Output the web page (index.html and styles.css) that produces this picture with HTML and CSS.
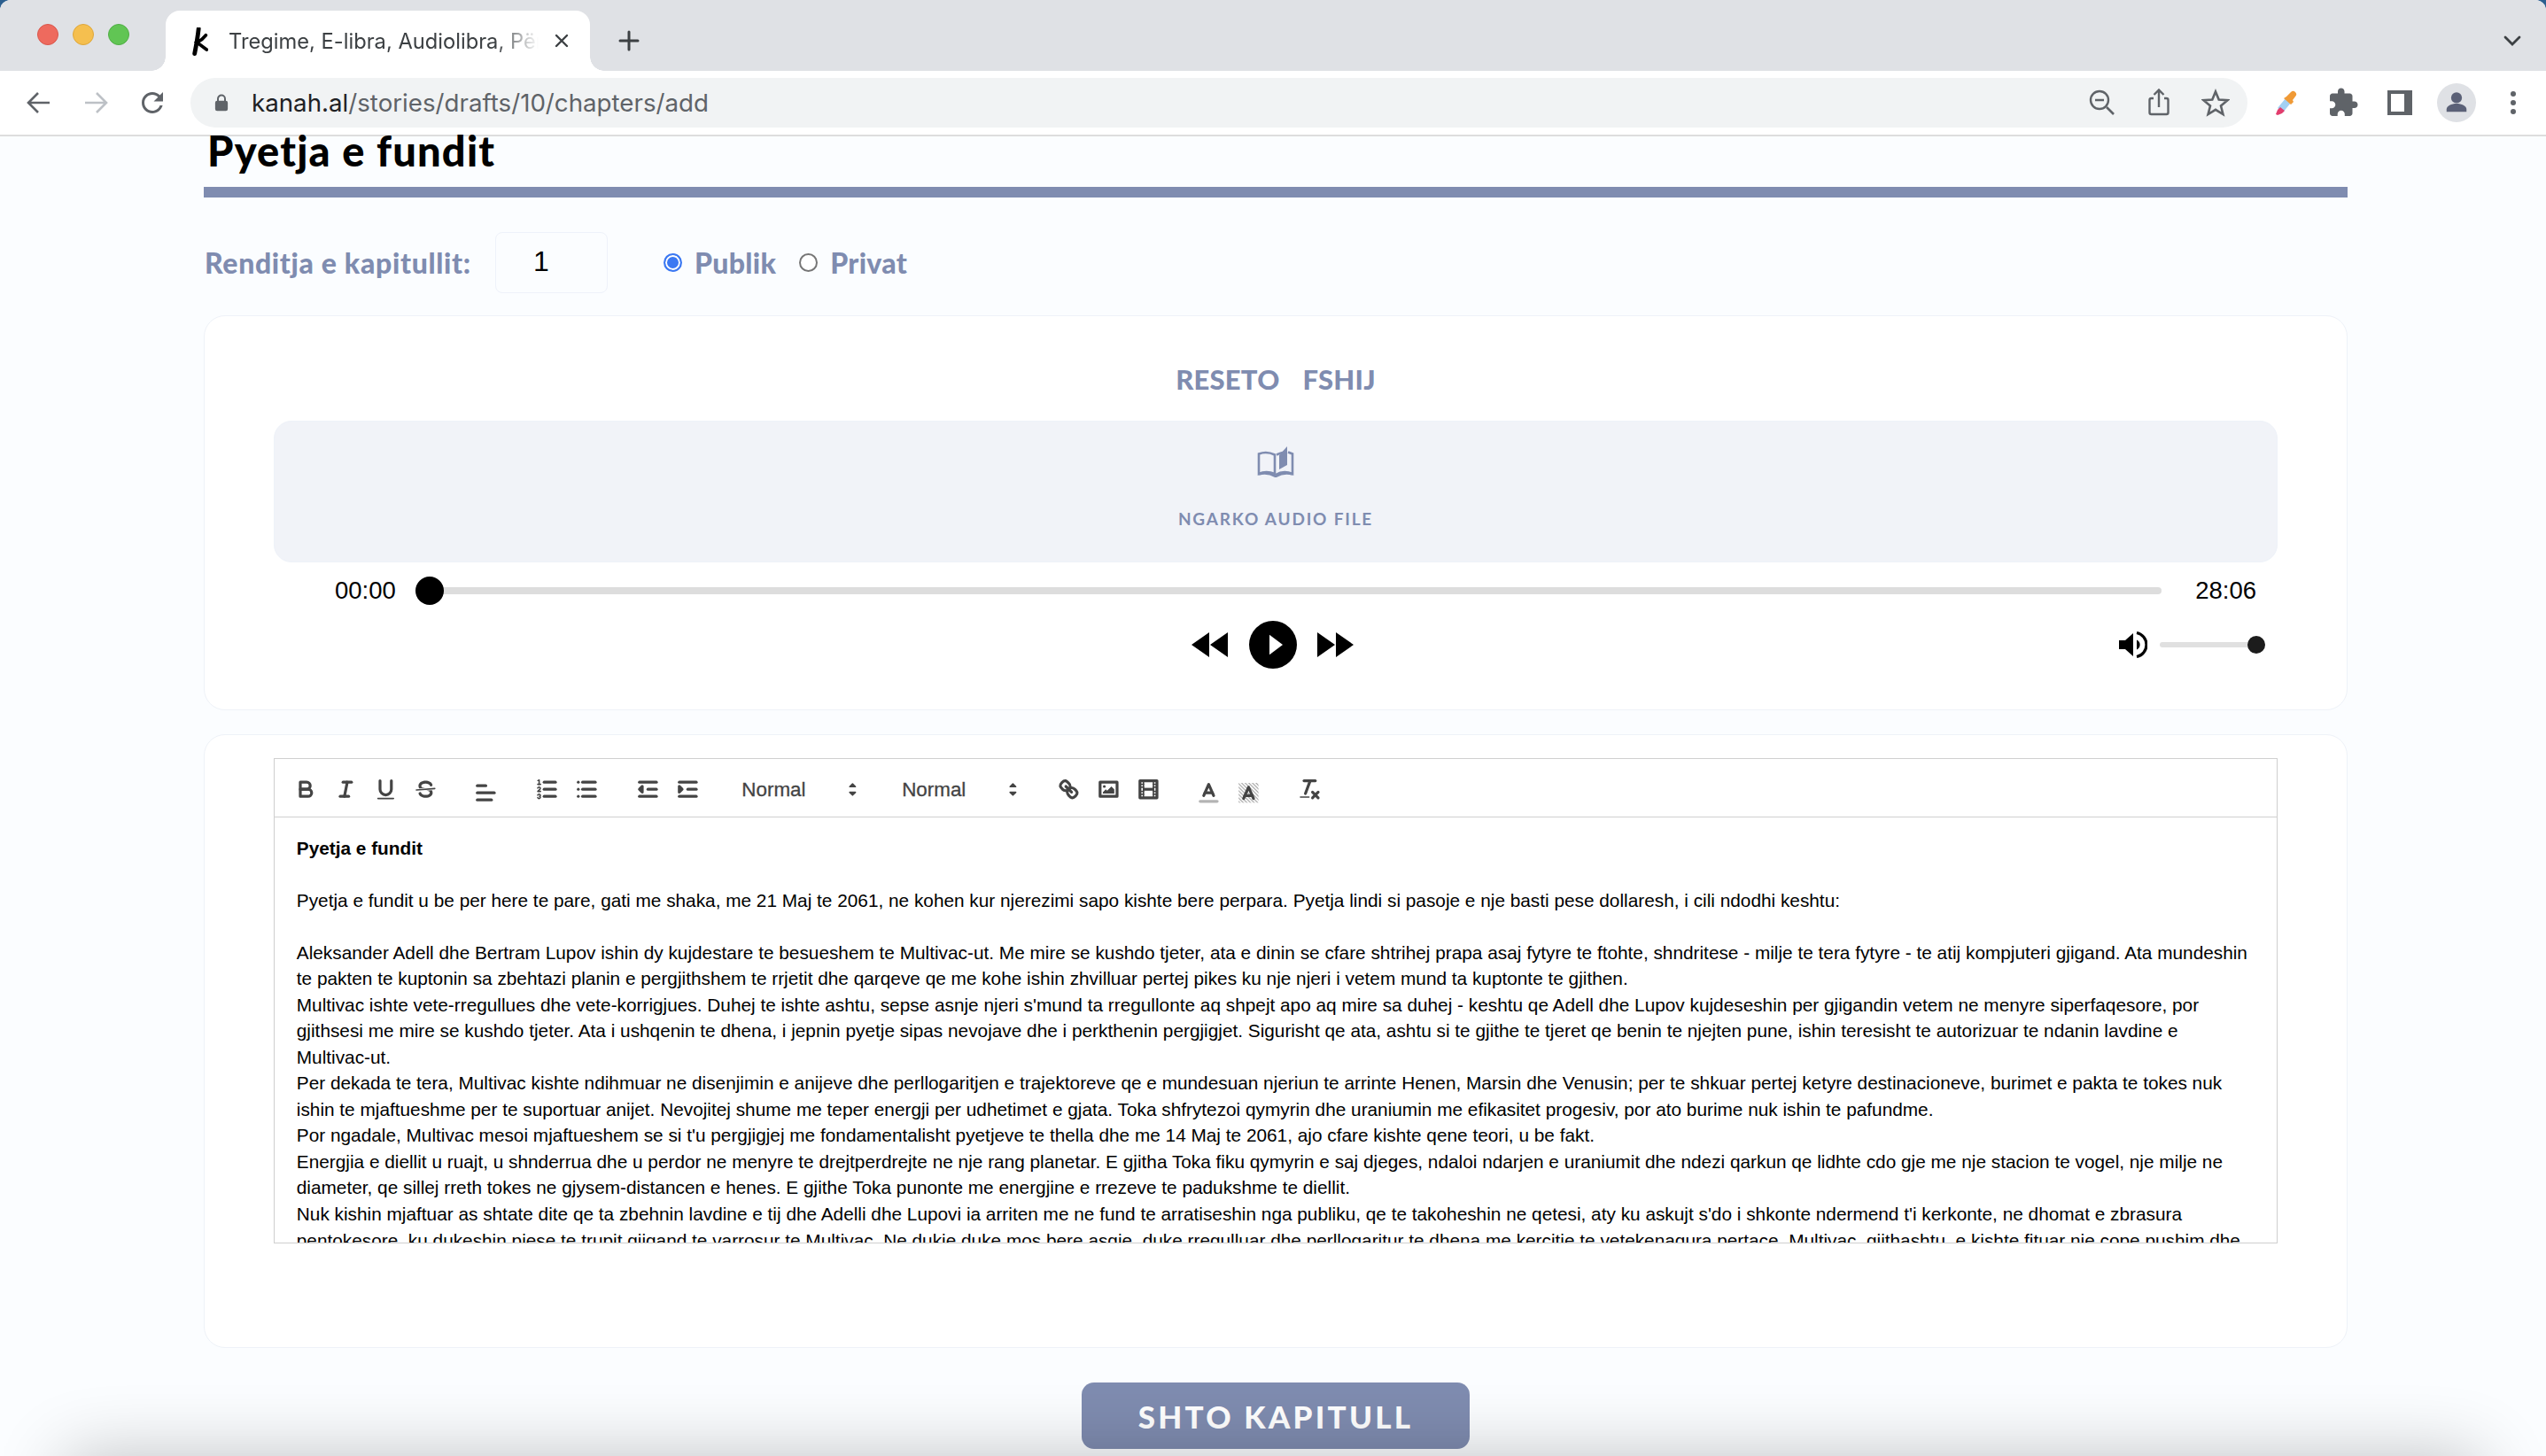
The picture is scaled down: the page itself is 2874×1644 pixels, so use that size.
FILE: index.html
```html
<!DOCTYPE html>
<html lang="sq">
<head>
<meta charset="utf-8">
<title>Tregime, E-libra, Audiolibra</title>
<link rel="stylesheet" href="styles.css">
</head>
<body>
<div class="window">
  <header class="tabstrip">
    <div class="lights"><span class="light red"></span><span class="light yellow"></span><span class="light green"></span></div>
    <div class="tab">
      <svg class="favicon" viewBox="0 0 20 34"><path d="M8 1 C7 10 5 22 3 32" fill="none" stroke="#000" stroke-width="5.400" stroke-linecap="round"/><path d="M17 9 C14 13 10 16 6 18 C10 21 14 24 18 27" fill="none" stroke="#000" stroke-width="4.200" stroke-linecap="round"/></svg>
      <span class="tab-title">Tregime, E-libra, Audiolibra, Për</span>
      <svg class="tab-close" viewBox="0 0 18 18"><path d="M3 3 15 15M15 3 3 15" stroke="#3c4043" stroke-width="2.400" stroke-linecap="round"/></svg>
    </div>
    <svg class="new-tab" viewBox="0 0 24 24"><path d="M12 2V22M2 12H22" stroke="#3c4043" stroke-width="3" stroke-linecap="round"/></svg>
    <svg class="tab-menu" viewBox="0 0 20 14"><path d="M2 3 10 11 18 3" fill="none" stroke="#3c4043" stroke-width="2.800" stroke-linecap="round"/></svg>
  </header>

  <nav class="toolbar">
    <span class="tb"><svg class="i28" viewBox="0 0 28 28"><path d="M26 14H3M13 3 2 14 13 25" fill="none" stroke="#5f6368" stroke-width="2.600"/></svg></span>
    <span class="tb"><svg class="i28" viewBox="0 0 28 28"><path d="M2 14H25M15 3 26 14 15 25" fill="none" stroke="#bdc1c6" stroke-width="2.600"/></svg></span>
    <span class="tb"><svg class="i36" viewBox="0 0 24 24"><path fill="#5f6368" d="M17.650 6.350C16.200 4.900 14.210 4 12 4c-4.420 0-7.990 3.580-7.990 8s3.570 8 7.990 8c3.730 0 6.840-2.550 7.730-6h-2.080c-.82 2.330-3.040 4-5.650 4-3.310 0-6-2.690-6-6s2.690-6 6-6c1.660 0 3.140.69 4.220 1.780L13 11h7V4l-2.350 2.350z"/></svg></span>
    <div class="omnibox">
      <svg class="lock" viewBox="0 0 18 22"><path d="M4.500 9V6a4.500 4.500 0 0 1 9 0v3" fill="none" stroke="#5f6368" stroke-width="2.200"/><rect x="1" y="8.500" width="16" height="13" rx="2.500" fill="#5f6368"/></svg>
      <span class="url"><b>kanah.al</b>/stories/drafts/10/chapters/add</span>
      <span class="tb"><svg class="i32" viewBox="0 0 32 32"><circle cx="13" cy="13" r="10" fill="none" stroke="#5f6368" stroke-width="2.400"/><path d="M8 13H18M21 21 29 29" stroke="#5f6368" stroke-width="2.600"/></svg></span>
      <span class="tb"><svg class="i32" viewBox="0 0 32 32"><path d="M10 11H7.500a2 2 0 0 0-2 2v14a2 2 0 0 0 2 2h17a2 2 0 0 0 2-2V13a2 2 0 0 0-2-2H22M16 21V2M10.500 7 16 1.500 21.500 7" fill="none" stroke="#5f6368" stroke-width="2.400"/></svg></span>
      <span class="tb"><svg class="i32" viewBox="0 0 32 32"><path d="M16 3.500 19.700 12.500 29.500 13.200 22 19.500 24.400 29 16 23.800 7.600 29 10 19.500 2.500 13.200 12.300 12.500Z" fill="none" stroke="#5f6368" stroke-width="2.600" stroke-linejoin="miter"/></svg></span>
    </div>
    <span class="tb first-ext"><svg class="i32" viewBox="0 0 32 32"><path d="M6 22 15 11 21 16 12 27Z" fill="#a3d0f3"/><path d="M4 29 6 24 9 21 14 25 11 28 6 30Z" fill="#e23d6d"/><path d="M14 11 21 4a3.500 3.500 0 0 1 5 5L23 13l1 2-3 3-8-7 3-2Z" fill="#f09a36"/></svg></span>
    <span class="tb"><svg class="i36" viewBox="0 0 24 24"><path fill="#5f6368" d="M20.500 11H19V7c0-1.100-.9-2-2-2h-4V3.500C13 2.120 11.880 1 10.500 1S8 2.120 8 3.500V5H4c-1.100 0-1.990.9-1.990 2v3.800H3.500c1.490 0 2.700 1.210 2.700 2.700s-1.210 2.700-2.700 2.700H2V20c0 1.100.9 2 2 2h3.800v-1.500c0-1.490 1.210-2.700 2.700-2.700 1.490 0 2.700 1.210 2.700 2.700V22H17c1.100 0 2-.9 2-2v-4h1.500c1.380 0 2.500-1.120 2.500-2.500S21.880 11 20.500 11z"/></svg></span>
    <span class="tb"><svg class="i28" viewBox="0 0 28 28"><path fill="#5f6368" fill-rule="evenodd" d="M0 0H28V28H0ZM4 4V24H19V4Z"/></svg></span>
    <span class="tb"><span class="avatar"><svg class="i32" viewBox="0 0 32 32"><circle cx="16" cy="10" r="6.500" fill="#5b6177"/><path d="M4 27V24c0-4.500 6-7 12-7s12 2.500 12 7v3Z" fill="#5b6177"/></svg></span></span>
    <span class="tb"><svg class="i32" viewBox="0 0 32 32"><circle cx="16" cy="6" r="3" fill="#5f6368"/><circle cx="16" cy="16" r="3" fill="#5f6368"/><circle cx="16" cy="26" r="3" fill="#5f6368"/></svg></span>
  </nav>

  <main class="page">
    <h1 class="title">Pyetja e fundit</h1>
    <div class="rule"></div>

    <div class="order">
      <span class="order-label">Renditja e kapitullit:</span>
      <span class="order-input">1</span>
      <span class="radio checked"></span><span class="radio-label">Publik</span>
      <span class="radio"></span><span class="radio-label">Privat</span>
    </div>

    <section class="card audio">
      <div class="actions"><span>RESETO</span><span>FSHIJ</span></div>
      <div class="drop">
        <svg class="book" viewBox="0 0 42 36"><path d="M2 9.500C7 7.500 14 7.500 20 10.500V32C14 29.500 7 29.500 2 32Z" fill="none" stroke="#7f8cb0" stroke-width="2.600"/><path d="M22 10.500C25 9 28 8 30 7.800M35 7.500 40 9.500V32C34 29.500 27 29.500 21 33" fill="none" stroke="#7f8cb0" stroke-width="2.600"/><path d="M2 32.500C8 30.500 14 31 21 35 28 31 34 30.500 40 32.500" fill="none" stroke="#7f8cb0" stroke-width="2.600"/><path d="M25 11 34 1V22L25 27Z" fill="#7f8cb0"/></svg>
        <span class="drop-label">NGARKO AUDIO FILE</span>
      </div>
      <div class="seek">
        <span class="time">00:00</span>
        <div class="track"><span class="thumb"></span></div>
        <span class="time end">28:06</span>
      </div>
      <div class="controls">
        <div class="transport">
          <svg class="skip" viewBox="0 0 41 28"><path d="M20 0V28L0 14ZM41 0V28L21 14Z"/></svg>
          <span class="play"><svg viewBox="0 0 16 24"><path d="M0 0V24L16 12Z" fill="#fff"/></svg></span>
          <svg class="skip" viewBox="0 0 41 28"><path d="M0 0V28L20 14ZM21 0V28L41 14Z"/></svg>
        </div>
        <div class="volume">
          <svg class="speaker" viewBox="0 0 32 30"><path d="M0 10H7L16 2V28L7 20H0Z"/><path d="M20 9.500a6 6 0 0 1 0 11Z"/><path d="M20 1.500a13.800 13.800 0 0 1 0 27" fill="none" stroke="#000" stroke-width="3.200"/></svg>
          <div class="vol-track"><span class="vol-thumb"></span></div>
        </div>
      </div>
    </section>

    <section class="card story">
      <div class="editor">
        <div class="ql-toolbar">
          <span class="ql-formats">
            <svg class="ql" viewBox="0 0 18 18"><path class="s" d="M5,4H9.500A2.500,2.500,0,0,1,12,6.500v0A2.500,2.500,0,0,1,9.500,9H5A0,0,0,0,1,5,9V4A0,0,0,0,1,5,4Z"/><path class="s" d="M5,9h5.500A2.500,2.500,0,0,1,13,11.500v0A2.500,2.500,0,0,1,10.500,14H5a0,0,0,0,1,0,0V9A0,0,0,0,1,5,9Z"/></svg>
            <svg class="ql" viewBox="0 0 18 18"><line class="s" x1="7" x2="13" y1="4" y2="4"/><line class="s" x1="5" x2="11" y1="14" y2="14"/><line class="s" x1="8" x2="10" y1="14" y2="4"/></svg>
            <svg class="ql" viewBox="0 0 18 18"><path class="s" d="M5,3V9a4.012,4.012,0,0,0,4,4H9a4.012,4.012,0,0,0,4-4V3"/><rect class="f" height="1" rx="0.500" ry="0.500" width="12" x="3" y="15"/></svg>
            <svg class="ql" viewBox="0 0 18 18"><line class="s thin" x1="15.500" x2="2.500" y1="8.500" y2="9.500"/><path class="f" d="M9.007,8C6.542,7.791,6,7.519,6,6.500,6,5.792,7.283,5,9,5c1.571,0,2.765.679,2.969,1.309a1,1,0,0,0,1.900-.617C13.356,4.106,11.354,3,9,3,6.200,3,4,4.538,4,6.500a3.200,3.200,0,0,0,.5,1.843Z"/><path class="f" d="M8.984,10C11.457,10.208,12,10.479,12,11.500c0,.708-1.283,1.500-3,1.500-1.571,0-2.765-.679-2.969-1.309a1,1,0,1,0-1.900.617C4.644,13.894,6.646,15,9,15c2.800,0,5-1.538,5-3.500a3.200,3.200,0,0,0-.5-1.843Z"/></svg>
          </span>
          <span class="ql-formats">
            <svg class="ql low" viewBox="0 0 18 18"><line class="s" x1="3" x2="15" y1="9" y2="9"/><line class="s" x1="3" x2="13" y1="14" y2="14"/><line class="s" x1="3" x2="9" y1="4" y2="4"/></svg>
          </span>
          <span class="ql-formats">
            <svg class="ql" viewBox="0 0 18 18"><line class="s" x1="7" x2="15" y1="4" y2="4"/><line class="s" x1="7" x2="15" y1="9" y2="9"/><line class="s" x1="7" x2="15" y1="14" y2="14"/><line class="s thin" x1="2.500" x2="4.500" y1="5.500" y2="5.500"/><path class="f" d="M3.500,6A0.500,0.500,0,0,1,3,5.500V3.085l-0.276.138A0.500,0.500,0,0,1,2.053,3c-0.124-.247-0.023-0.324.224-0.447l1-.5A0.500,0.500,0,0,1,4,2.500v3A0.500,0.500,0,0,1,3.500,6Z"/><path class="s thin" d="M4.500,10.500h-2c0-.234,1.850-1.076,1.850-2.234A0.959,0.959,0,0,0,2.500,8.156"/><path class="s thin" d="M2.500,14.846a0.959,0.959,0,0,0,1.850-.109A0.700,0.700,0,0,0,3.750,14a0.688,0.688,0,0,0,.6-0.736,0.959,0.959,0,0,0-1.850-.109"/></svg>
            <svg class="ql" viewBox="0 0 18 18"><line class="s" x1="6" x2="15" y1="4" y2="4"/><line class="s" x1="6" x2="15" y1="9" y2="9"/><line class="s" x1="6" x2="15" y1="14" y2="14"/><line class="s" x1="3" x2="3" y1="4" y2="4"/><line class="s" x1="3" x2="3" y1="9" y2="9"/><line class="s" x1="3" x2="3" y1="14" y2="14"/></svg>
          </span>
          <span class="ql-formats">
            <svg class="ql" viewBox="0 0 18 18"><line class="s" x1="3" x2="15" y1="14" y2="14"/><line class="s" x1="3" x2="15" y1="4" y2="4"/><line class="s" x1="9" x2="15" y1="9" y2="9"/><polygon class="s f" points="5 7 5 11 3 9 5 7"/></svg>
            <svg class="ql" viewBox="0 0 18 18"><line class="s" x1="3" x2="15" y1="14" y2="14"/><line class="s" x1="3" x2="15" y1="4" y2="4"/><line class="s" x1="9" x2="15" y1="9" y2="9"/><polygon class="s f" points="3 7 3 11 5 9 3 7"/></svg>
          </span>
          <span class="ql-formats">
            <span class="picker">Normal<svg class="ql-arrows" viewBox="0 0 18 18"><polygon class="s thin f" points="7 11 9 13 11 11 7 11"/><polygon class="s thin f" points="7 7 9 5 11 7 7 7"/></svg></span>
          </span>
          <span class="ql-formats">
            <span class="picker">Normal<svg class="ql-arrows" viewBox="0 0 18 18"><polygon class="s thin f" points="7 11 9 13 11 11 7 11"/><polygon class="s thin f" points="7 7 9 5 11 7 7 7"/></svg></span>
          </span>
          <span class="ql-formats">
            <svg class="ql" viewBox="0 0 18 18"><line class="s" x1="7" x2="11" y1="7" y2="11"/><path class="s" d="M8.900,4.577a3.476,3.476,0,0,1,.36,4.679A3.476,3.476,0,0,1,4.577,8.900C3.185,7.500,2.035,6.400,4.217,4.217S7.500,3.185,8.900,4.577Z"/><path class="s" d="M13.423,9.100a3.476,3.476,0,0,0-4.679-.36,3.476,3.476,0,0,0,.36,4.679c1.392,1.392,2.500,2.542,4.679.36S14.815,10.500,13.423,9.100Z"/></svg>
            <svg class="ql" viewBox="0 0 18 18"><rect class="s" height="10" width="12" x="3" y="4"/><circle class="f" cx="6" cy="7" r="1"/><polygon class="f" points="5 12 5 11 7 9 8 10 11 7 13 9 13 12 5 12"/></svg>
            <svg class="ql" viewBox="0 0 18 18"><rect class="s" height="12" width="12" x="3" y="3"/><rect class="f" height="12" width="1" x="5" y="3"/><rect class="f" height="12" width="1" x="12" y="3"/><rect class="f" height="2" width="8" x="5" y="8"/><rect class="f" height="1" width="3" x="3" y="5"/><rect class="f" height="1" width="3" x="3" y="7"/><rect class="f" height="1" width="3" x="3" y="10"/><rect class="f" height="1" width="3" x="3" y="12"/><rect class="f" height="1" width="3" x="12" y="5"/><rect class="f" height="1" width="3" x="12" y="7"/><rect class="f" height="1" width="3" x="12" y="10"/><rect class="f" height="1" width="3" x="12" y="12"/></svg>
          </span>
          <span class="ql-formats">
            <svg class="ql low" viewBox="0 0 18 18"><line class="s faint" x1="3" x2="15" y1="15" y2="15"/><polyline class="s" points="5.500 11 9 3 12.500 11"/><line class="s" x1="11.630" x2="6.380" y1="9" y2="9"/></svg>
            <svg class="ql low" viewBox="0 0 18 18"><defs><pattern id="hatch" width="1.800" height="1.800" patternUnits="userSpaceOnUse" patternTransform="rotate(45)"><rect width="1.800" height=".7" fill="#444"/></pattern></defs><rect x="2" y="2" width="14" height="14" fill="url(#hatch)" opacity=".5"/><polyline class="s" points="5.500 13 9 5 12.500 13"/><line class="s" x1="11.630" x2="6.380" y1="11" y2="11"/></svg>
          </span>
          <span class="ql-formats">
            <svg class="ql" viewBox="0 0 18 18"><line class="s" x1="5" x2="13" y1="3" y2="3"/><line class="s" x1="6" x2="9.350" y1="12" y2="3"/><line class="s" x1="11" x2="15" y1="11" y2="15"/><line class="s" x1="15" x2="11" y1="11" y2="15"/><rect class="f" height="1" rx="0.500" ry="0.500" width="7" x="2" y="14"/></svg>
          </span>
        </div>
        <div class="ql-editor">
          <p><strong>Pyetja e fundit</strong></p>
          <p><br></p>
          <p>Pyetja e fundit u be per here te pare, gati me shaka, me 21 Maj te 2061, ne kohen kur njerezimi sapo kishte bere perpara. Pyetja lindi si pasoje e nje basti pese dollaresh, i cili ndodhi keshtu:</p>
          <p><br></p>
          <p>Aleksander Adell dhe Bertram Lupov ishin dy kujdestare te besueshem te Multivac-ut. Me mire se kushdo tjeter, ata e dinin se cfare shtrihej prapa asaj fytyre te ftohte, shndritese - milje te tera fytyre - te atij kompjuteri gjigand. Ata mundeshin te pakten te kuptonin sa zbehtazi planin e pergjithshem te rrjetit dhe qarqeve qe me kohe ishin zhvilluar pertej pikes ku nje njeri i vetem mund ta kuptonte te gjithen.</p>
          <p>Multivac ishte vete-rregullues dhe vete-korrigjues. Duhej te ishte ashtu, sepse asnje njeri s'mund ta rregullonte aq shpejt apo aq mire sa duhej - keshtu qe Adell dhe Lupov kujdeseshin per gjigandin vetem ne menyre siperfaqesore, por gjithsesi me mire se kushdo tjeter. Ata i ushqenin te dhena, i jepnin pyetje sipas nevojave dhe i perkthenin pergjigjet. Sigurisht qe ata, ashtu si te gjithe te tjeret qe benin te njejten pune, ishin teresisht te autorizuar te ndanin lavdine e Multivac-ut.</p>
          <p>Per dekada te tera, Multivac kishte ndihmuar ne disenjimin e anijeve dhe perllogaritjen e trajektoreve qe e mundesuan njeriun te arrinte Henen, Marsin dhe Venusin; per te shkuar pertej ketyre destinacioneve, burimet e pakta te tokes nuk ishin te mjaftueshme per te suportuar anijet. Nevojitej shume me teper energji per udhetimet e gjata. Toka shfrytezoi qymyrin dhe uraniumin me efikasitet progesiv, por ato burime nuk ishin te pafundme.</p>
          <p>Por ngadale, Multivac mesoi mjaftueshem se si t'u pergjigjej me fondamentalisht pyetjeve te thella dhe me 14 Maj te 2061, ajo cfare kishte qene teori, u be fakt.</p>
          <p>Energjia e diellit u ruajt, u shnderrua dhe u perdor ne menyre te drejtperdrejte ne nje rang planetar. E gjitha Toka fiku qymyrin e saj djeges, ndaloi ndarjen e uraniumit dhe ndezi qarkun qe lidhte cdo gje me nje stacion te vogel, nje milje ne diameter, qe sillej rreth tokes ne gjysem-distancen e henes. E gjithe Toka punonte me energjine e rrezeve te padukshme te diellit.</p>
          <p>Nuk kishin mjaftuar as shtate dite qe ta zbehnin lavdine e tij dhe Adelli dhe Lupovi ia arriten me ne fund te arratiseshin nga publiku, qe te takoheshin ne qetesi, aty ku askujt s'do i shkonte ndermend t'i kerkonte, ne dhomat e zbrasura pentokesore, ku dukeshin pjese te trupit gjigand te varrosur te Multivac. Ne dukje duke mos bere asgje, duke rregulluar dhe perllogaritur te dhena me kercitje te vetekenaqura pertace, Multivac, gjithashtu, e kishte fituar nje cope pushim dhe</p>
        </div>
      </div>
    </section>

    <div class="submit-row"><button class="submit">SHTO KAPITULL</button></div>
  </main>
  <div class="edge-shadow"></div>
</div>
</body>
</html>
```

FILE: styles.css
```css
* { box-sizing: border-box; }
html, body { margin: 0; width: 2874px; height: 1644px; overflow: hidden; background: #2c5f8f; }

.window {
  position: relative;
  width: 2874px;
  height: 1644px;
  overflow: hidden;
  border-radius: 12px 12px 0 0;
  background: #fbfdff;
  font-family: "Liberation Sans", sans-serif;
}

/* browser chrome */
.tabstrip {
  height: 80px;
  background: #dfe1e5;
  display: flex;
  align-items: flex-start;
  font-family: Inter, sans-serif;
}
.lights { display: flex; gap: 16px; margin: 27px 0 0 42px; width: 145px; }
.light { width: 24px; height: 24px; border-radius: 50%; }
.red { background: #ee6a5e; border: 1px solid #d9574c; }
.yellow { background: #f5bf4f; border: 1px solid #dea73b; }
.green { background: #61c554; border: 1px solid #4fae44; }
.tab {
  position: relative;
  width: 479px;
  height: 68px;
  margin-top: 12px;
  background: #fff;
  border-radius: 16px 16px 0 0;
  display: flex;
  align-items: center;
  padding: 0 23px 0 30px;
}
.tab::before, .tab::after {
  content: "";
  position: absolute;
  bottom: 0;
  width: 16px;
  height: 16px;
}
.tab::before { left: -16px; background: radial-gradient(circle at 0 0, transparent 15.500px, #fff 16px); }
.tab::after { right: -16px; background: radial-gradient(circle at 100% 0, transparent 15.500px, #fff 16px); }
.favicon { width: 18px; height: 32px; flex: none; margin-top: 2px; }
.tab-title {
  width: 350px;
  margin-left: 23px;
  font-size: 23.700px;
  color: #3c4043;
  white-space: nowrap;
  overflow: hidden;
  -webkit-mask-image: linear-gradient(to right, #000 86%, transparent 100%);
  mask-image: linear-gradient(to right, #000 86%, transparent 100%);
}
.tab-close { width: 18px; height: 18px; margin-left: auto; flex: none; }
.new-tab { width: 24px; height: 24px; margin: 34px 0 0 32px; flex: none; }
.tab-menu { width: 20px; height: 14px; margin: 39px 0 0 2104px; flex: none; }

.toolbar {
  height: 74px;
  background: #fff;
  border-bottom: 2px solid #dddddd;
  display: flex;
  align-items: center;
  padding: 0 5px 0 12px;
  font-family: Inter, sans-serif;
}
.tb { width: 64px; height: 64px; display: flex; align-items: center; justify-content: center; flex: none; }
.i28 { width: 28px; height: 28px; }
.i32 { width: 32px; height: 32px; }
.i36 { width: 36px; height: 36px; }
.omnibox {
  flex: 1;
  height: 56px;
  margin: 0 12px 0 11px;
  border-radius: 28px;
  background: #f1f3f4;
  display: flex;
  align-items: center;
  padding: 0 4px 0 27px;
}
.lock { width: 16px; height: 20px; flex: none; }
.url { flex: 1; margin-left: 26px; font-size: 27.700px; color: #5f6368; white-space: nowrap; }
.url b { font-weight: 400; color: #202124; }
.avatar { width: 44px; height: 44px; border-radius: 50%; background: #dfe1e5; display: flex; align-items: center; justify-content: center; }
.avatar .i32 { width: 30px; height: 30px; }

/* page */
.page { width: 2420px; margin-left: 230px; }
.title {
  margin: 0;
  height: 57px;
  padding-left: 4px;
  font: 900 47px/32px Lato, sans-serif;
  letter-spacing: 1.200px;
  color: #000;
}
.rule { height: 12px; background: #7f8cb0; }

.order { display: flex; align-items: center; height: 69px; margin-top: 39px; padding-left: 1px; color: #7f8cb0; font: 900 32px Lato, sans-serif; letter-spacing: .3px; }
.order-label { width: 328px; letter-spacing: .65px; }
.order-input {
  width: 127px;
  height: 69px;
  border: 1.500px solid #eef2fa;
  border-radius: 8px;
  padding-left: 42px;
  font: 400 32px/64px "Liberation Sans", sans-serif;
  letter-spacing: 0;
  color: #000;
}
.radio {
  width: 21px;
  height: 21px;
  border-radius: 50%;
  border: 2px solid #767676;
  background: #fff;
  margin-left: 63px;
  flex: none;
}
.radio.checked { border-color: #3b78f2; background: #3b78f2; box-shadow: inset 0 0 0 2px #fff; }
.radio + .radio-label { margin-left: 14px; }
.radio-label + .radio { margin-left: 26px; }

.card {
  background: #fff;
  border: 1.500px solid #eef2f8;
  border-radius: 24px;
}
.audio { margin-top: 25px; height: 446px; padding: 0 78px; }
.actions {
  height: 118px;
  padding-top: 24px;
  display: flex;
  align-items: center;
  justify-content: center;
  gap: 26px;
  color: #7f8cb0;
  font: 900 31px Lato, sans-serif;
  letter-spacing: .2px;
}
.drop {
  height: 160px;
  background: #f1f3f8;
  border: 1px solid #eef2f8;
  border-radius: 20px;
  display: flex;
  flex-direction: column;
  align-items: center;
  padding-top: 27px;
}
.book { width: 42px; height: 36px; }
.drop-label { margin-top: 35px; font: 700 19px/24px Lato, sans-serif; letter-spacing: 1.800px; color: #7f8cb0; }
.seek { display: flex; align-items: center; height: 32px; margin-top: 16px; padding-left: 69px; padding-right: 24px; }
.time { font-size: 27.500px; color: #000; }
.end { margin-left: 38px; }
.track { position: relative; flex: 1; height: 8px; margin-left: 22px; border-radius: 4px; background: #dddddd; }
.thumb { position: absolute; left: 0; top: -12px; width: 32px; height: 32px; border-radius: 50%; background: #000; }
.controls { display: grid; grid-template-columns: 1036px auto 1fr; align-items: center; height: 54px; margin-top: 18px; }
.transport { grid-column: 2; display: flex; align-items: center; gap: 24px; }
.skip { width: 41px; height: 28px; fill: #000; display: block; }
.skip:last-child { margin-left: -1px; }
.play { width: 54px; height: 54px; border-radius: 50%; background: #000; display: flex; align-items: center; justify-content: center; padding-left: 6px; }
.play svg { width: 15px; height: 24px; }
.volume { grid-column: 3; justify-self: end; display: flex; align-items: center; padding-right: 14px; }
.speaker { width: 32px; height: 30px; fill: #000; }
.vol-track { position: relative; width: 119px; height: 6px; margin-left: 14px; border-radius: 3px; background: #e0e0e0; }
.vol-thumb { position: absolute; right: 0; top: -7px; width: 20px; height: 20px; border-radius: 50%; background: #1c1c1c; }

.story { margin-top: 27px; height: 693px; padding: 26px 78px 0; }
.editor { height: 548px; border: 1.600px solid #cfcfcf; display: flex; flex-direction: column; overflow: hidden; }
.ql-toolbar { flex: none; height: 66.400px; display: flex; align-items: flex-start; padding: 14.800px 12.800px 0 13.200px; border-bottom: 1.600px solid #cfcfcf; }
.ql-formats { display: flex; align-items: center; margin-right: 24px; height: 38.400px; }
.ql { width: 44.800px; height: 38.400px; padding: 4.800px 8px; flex: none; }
.low { position: relative; top: 4px; }
.s { fill: none; stroke: #444; stroke-width: 2; stroke-linecap: round; stroke-linejoin: round; }
.thin { stroke-width: 1; }
.f { fill: #444; }
.faint { opacity: .4; }
.picker {
  position: relative;
  width: 156.800px;
  height: 38.400px;
  padding-left: 15px;
  font-size: 22.400px;
  line-height: 40.400px;
  color: #444;
  -webkit-text-stroke: .3px #444;
}
.ql-arrows { position: absolute; right: 2px; top: 5px; width: 28.800px; height: 28.800px; }
.ql-editor { flex: 1; overflow: hidden; padding: 19.200px 24px 19.200px 24.800px; font-size: 20.800px; line-height: 1.42; color: #000; }
.ql-editor p { margin: 0; }

.submit-row { display: flex; justify-content: center; margin-top: 39px; }
.submit {
  width: 438px;
  height: 75px;
  border: 0;
  border-radius: 14px;
  background: #7f8cb0;
  color: #fff;
  font: 900 35px Lato, sans-serif;
  letter-spacing: 3.200px;
}

.edge-shadow {
  position: absolute;
  left: 74px;
  right: 74px;
  top: 1644px;
  height: 100px;
  box-shadow: 0 0 80px 0 rgba(0, 0, 0, .24);
}
```
